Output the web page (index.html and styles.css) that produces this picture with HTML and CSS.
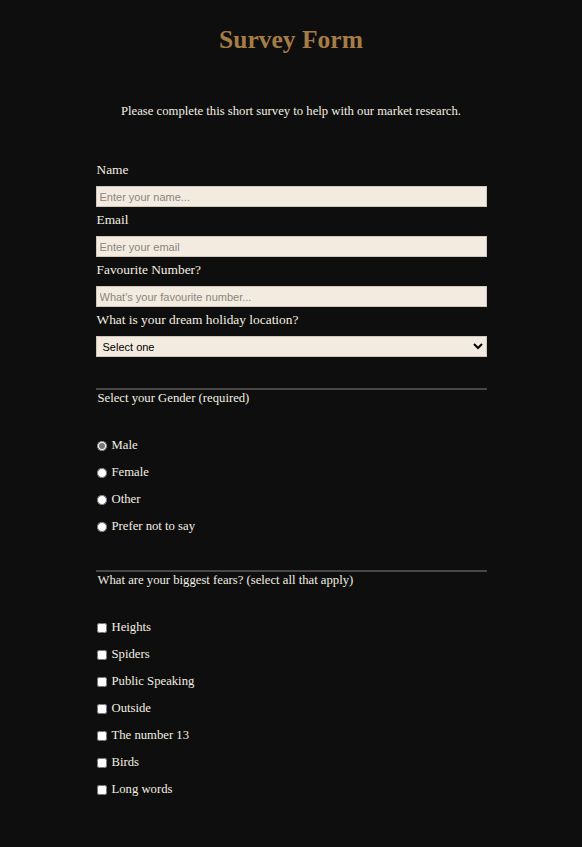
FILE: index.html
```html
<!DOCTYPE html>
<html lang="en">
<head>
<meta charset="utf-8">
<title>Survey Form</title>
<link rel="stylesheet" href="styles.css">
</head>
<body>
<h1 class="title">Survey Form</h1>
<p class="desc">Please complete this short survey to help with our market research.</p>
<form class="form">
  <label class="label" for="name">Name</label>
  <input class="field" id="name" type="text" placeholder="Enter your name...">
  <label class="label" for="email">Email</label>
  <input class="field" id="email" type="email" placeholder="Enter your email">
  <label class="label" for="number">Favourite Number?</label>
  <input class="field" id="number" type="number" placeholder="What's your favourite number...">
  <label class="label" for="loc">What is your dream holiday location?</label>
  <select class="field select" id="loc">
    <option>Select one</option>
  </select>

  <div class="group group-gender">
    <div class="legend">Select your Gender (required)</div>
    <div class="options">
      <label class="opt"><input class="radio" type="radio" name="g" checked> Male</label>
      <label class="opt"><input class="radio" type="radio" name="g"> Female</label>
      <label class="opt"><input class="radio" type="radio" name="g"> Other</label>
      <label class="opt"><input class="radio" type="radio" name="g"> Prefer not to say</label>
    </div>
  </div>

  <div class="group group-fears">
    <div class="legend">What are your biggest fears? (select all that apply)</div>
    <div class="options">
      <label class="opt"><input class="check" type="checkbox"> Heights</label>
      <label class="opt"><input class="check" type="checkbox"> Spiders</label>
      <label class="opt"><input class="check" type="checkbox"> Public Speaking</label>
      <label class="opt"><input class="check" type="checkbox"> Outside</label>
      <label class="opt"><input class="check" type="checkbox"> The number 13</label>
      <label class="opt"><input class="check" type="checkbox"> Birds</label>
      <label class="opt"><input class="check" type="checkbox"> Long words</label>
    </div>
  </div>
</form>
</body>
</html>
```
FILE: styles.css
```css
html, body {
  margin: 0;
  padding: 0;
  background: #0e0e0e;
}
body {
  color: #f4eee2;
  font-family: "Liberation Serif", "Times New Roman", serif;
  font-size: 12.7px;
  min-height: 847px;
}
.title {
  margin: 25px 0 0;
  text-align: center;
  font-size: 25.5px;
  line-height: 30px;
  font-weight: bold;
  color: #a57c45;
}
.desc {
  margin: 48px 0 0;
  text-align: center;
  line-height: 16px;
}
.form {
  width: 391px;
  margin: 43px auto 0;
  display: flex;
  flex-direction: column;
}
.label {
  display: block;
  font-size: 13.4px;
  line-height: 16px;
  margin: 0 0 8px 1px;
}
.field {
  box-sizing: border-box;
  width: 391px;
  height: 21px;
  margin: 0 0 5px;
  border: 1px solid #cfc7bb;
  background: #f3ebdf;
  font-family: "Liberation Sans", Arial, sans-serif;
  font-size: 11px;
  color: #000;
  padding: 1px 3px;
  outline: none;
}
.field::placeholder {
  color: #8a8580;
}
.select {
  padding: 0 2px;
  color: #000;
}
.group {
  border-top: 2px solid #4a4646;
  margin-top: 26px;
  padding: 0 0 0 2px;
}
.group-fears {
  margin-top: 36px;
}
.legend {
  line-height: 16px;
}
.options {
  display: flex;
  flex-direction: column;
  padding-top: 31px;
  gap: 11px;
}
.opt {
  display: flex;
  align-items: center;
  height: 16px;
  margin-left: -2px;
}
.radio, .check {
  width: 10px;
  height: 10px;
  margin: 2px 5px 0 1px;
}
.radio {
  accent-color: #777;
}
```
